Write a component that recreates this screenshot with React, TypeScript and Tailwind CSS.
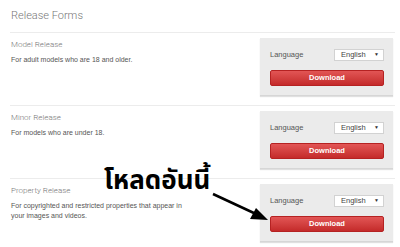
const forms = [
  { title: 'Model Release', desc: 'For adult models who are 18 and older.' },
  { title: 'Minor Release', desc: 'For models who are under 18.' },
  {
    title: 'Property Release',
    desc: 'For copyrighted and restricted properties that appear in your images and videos.',
  },
];

function DownloadPanel() {
  return (
    <div className="w-[133px] h-[58px] mr-[2px] bg-[#ebebeb] border-b border-[#d6d6d6] shadow-[0_1px_1px_rgba(0,0,0,0.12)] pl-[10px] pr-[9px] pt-[11px] flex flex-col">
      <div className="flex items-center justify-between h-[11px]">
        <span className="text-[7.5px] text-[#555] font-['Liberation_Sans',sans-serif]">Language</span>
        <div className="w-[50px] h-[12px] bg-white border border-[#d2d2d2] flex items-center justify-between pl-[6px] pr-[4px]">
          <span className="text-[7.5px] text-[#444] font-['Liberation_Sans',sans-serif] leading-none">English</span>
          <span className="text-[5px] text-[#333] leading-none">▼</span>
        </div>
      </div>
      <button className="mt-[10px] h-[16px] w-full rounded-[2px] border border-[#b52222] bg-gradient-to-b from-[#e25555] to-[#c42a2a] text-white text-[7.5px] font-bold font-['Liberation_Sans',sans-serif] leading-none">
        Download
      </button>
    </div>
  );
}

export default function App() {
  return (
    <div className="w-[400px] h-[247px] bg-white overflow-hidden relative">
      <div className="ml-[10px] w-[385px]">
        <h1 className="pt-[6px] pl-[1px] h-[32px] text-[11px] leading-[20px] font-light text-[#777] font-['Roboto',sans-serif]">
          Release Forms
        </h1>
        {forms.map((f) => (
          <div key={f.title} className="border-t border-[#ececec] pt-[5px] pb-[9px] flex justify-between">
            <div className="pl-[1px] pt-[1px] w-[185px]">
              <div className="text-[8px] leading-[12px] font-light text-[#777] font-['Roboto',sans-serif]">{f.title}</div>
              <p className="mt-[4px] text-[7px] leading-[10px] text-[#555] font-['Liberation_Sans',sans-serif]">{f.desc}</p>
            </div>
            <DownloadPanel />
          </div>
        ))}
      </div>

      {/* annotation */}
      <div className="absolute left-[104px] top-[164px] text-[26px] font-bold text-black leading-[34px] font-['Noto_Sans_Thai','Loma','Garuda','DejaVu_Sans',sans-serif]">
        โหลดอันนี้
      </div>
      <svg className="absolute left-0 top-0" width="400" height="247">
        <line x1="213" y1="194" x2="256" y2="214" stroke="#000" strokeWidth="2.5" />
        <polygon points="268,220 250,219 256,208" fill="#000" />
      </svg>
    </div>
  );
}
